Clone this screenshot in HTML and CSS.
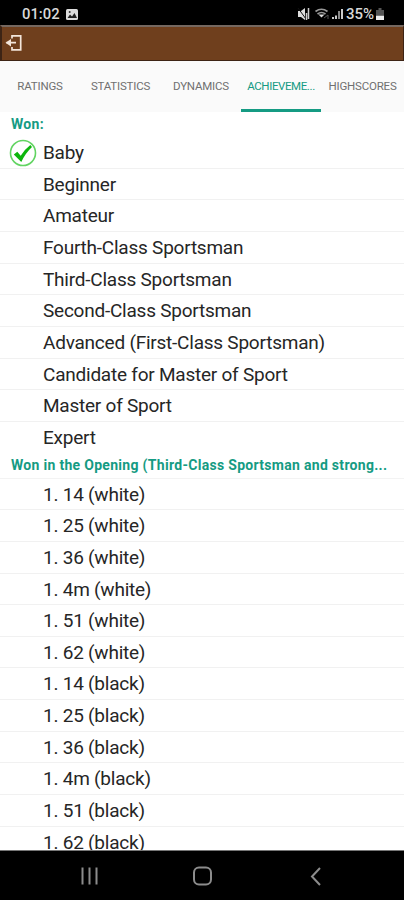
FILE: index.html
```html
<!DOCTYPE html>
<html lang="en">
<head>
<meta charset="utf-8">
<title>Achievements</title>
<link rel="stylesheet" href="styles.css">
</head>
<body>
<div class="screen">
  <div class="status">
    <span class="clock">01:02</span>
    <svg class="picture" width="12" height="11" viewBox="0 0 12 11"><rect width="12" height="11" rx="1.5" fill="#ddd"/><path d="M1.5 9 4 5.500l2 2L8.500 4l2.500 5z" fill="#222"/><circle cx="3.700" cy="3" r="1" fill="#333"/></svg>
    <svg class="signals" width="50" height="14" viewBox="0 0 50 14">
      <path d="M1 4h3l4-3v12L4 10H1z" fill="#ddd"/><path d="M1 1l8 11" stroke="#111" stroke-width="1"/><path d="M9.500 6v7M11.500 1v11" stroke="#ccc" stroke-width="1.500"/>
      <path d="M18.500 4.500q6-4.500 12 0M20.500 7q4-3 8 0" fill="none" stroke="#999" stroke-width="1.700"/><path d="M21.500 7.500h6l-3 3z" fill="#ddd"/><path d="M27 11l4-3v4" stroke="#555" fill="none"/>
      <path d="M36 12V10M39 12V8.500" stroke="#ccc" stroke-width="2"/><path d="M42 12V4" stroke="#888" stroke-width="2"/><path d="M45 12V2" stroke="#ccc" stroke-width="2"/>
    </svg>
    <span class="percent">35%</span>
    <svg class="battery" width="8" height="13" viewBox="0 0 8 13"><path d="M2.500 0h3v2H8v5H0V2h2.500z" fill="#555"/><path d="M0 7.500h8V12H0z" fill="#eee"/></svg>
  </div>
  <div class="toolbar">
    <svg width="18" height="18" viewBox="0 0 18 18" fill="none" stroke="#f3e6db" stroke-width="1.700"><path d="M7 4.500V1.800h8.700v14H7v-2.700M1.500 8.700H11"/><path d="M6 5 .5 8.700l5.500 3.700z" fill="#f3e6db" stroke="none"/></svg>
  </div>
  <div class="tabs">
    <div class="tab">RATINGS</div><div class="tab">STATISTICS</div><div class="tab">DYNAMICS</div><div class="tab active">ACHIEVEME...</div><div class="tab">HIGHSCORES</div>
  </div>
  <div class="content">
    <div class="heading">Won:</div>
    <div class="row"><svg class="check" width="28" height="28" viewBox="0 0 28 28"><circle cx="14" cy="14" r="12.500" fill="#fff" stroke="#62d462" stroke-width="1.600"/><path d="M4.800 15.500 8.300 12.700l3.400 4.100Q15.500 10.500 21.300 6l1.700 2Q16.500 14 12.300 23z" fill="#0db60d"/></svg>Baby</div>
    <div class="row">Beginner</div>
    <div class="row">Amateur</div>
    <div class="row">Fourth-Class Sportsman</div>
    <div class="row">Third-Class Sportsman</div>
    <div class="row">Second-Class Sportsman</div>
    <div class="row">Advanced (First-Class Sportsman)</div>
    <div class="row">Candidate for Master of Sport</div>
    <div class="row">Master of Sport</div>
    <div class="row last">Expert</div>
    <div class="heading ruled">Won in the Opening (Third-Class Sportsman and strong...</div>
    <div class="row">1. 14 (white)</div>
    <div class="row">1. 25 (white)</div>
    <div class="row">1. 36 (white)</div>
    <div class="row">1. 4m (white)</div>
    <div class="row">1. 51 (white)</div>
    <div class="row">1. 62 (white)</div>
    <div class="row">1. 14 (black)</div>
    <div class="row">1. 25 (black)</div>
    <div class="row">1. 36 (black)</div>
    <div class="row">1. 4m (black)</div>
    <div class="row">1. 51 (black)</div>
    <div class="row">1. 62 (black)</div>
  </div>
  <div class="nav">
    <svg width="404" height="50" viewBox="0 0 404 50" fill="none" stroke="#8c8c8c" stroke-width="2"><path d="M82.500 16.500v17M89.500 16.500v17M96.500 16.500v17"/><rect x="194" y="16.500" width="17" height="17" rx="5"/><path d="m320 17-8 8.500 8 8.500"/></svg>
  </div>
</div>
</body>
</html>
```
FILE: styles.css
```css
* { box-sizing: border-box; }
body { margin: 0; font-family: Roboto, "Liberation Sans", sans-serif; background: #fff; }
.screen { width: 404px; height: 900px; display: flex; flex-direction: column; overflow: hidden; }
.status { height: 25px; flex: none; background: #000; color: #d8d8d8; display: flex; align-items: center; padding: 3px 20px 0 22px; }
.clock { font-size: 14.8px; font-weight: 500; line-height: 20px; }
.picture { margin-left: 6px; }
.signals { margin-left: auto; }
.percent { font-size: 15px; font-weight: 500; line-height: 20px; margin: 0 2px 0 -1px; }
.toolbar { height: 36px; flex: none; background: #6f3f1d; border: solid #3d2415; border-top-color: #756860; border-width: 2px 1px 1px 2px; padding: 7px 0 0 3px; }
.toolbar svg { display: block; }
.tabs { height: 51px; flex: none; background: #fafafa; display: grid; grid-template-columns: 80px 81px 80px 80px 1fr; }
.tab { height: 51px; font-size: 11.5px; color: #707070; text-align: center; line-height: 50px; white-space: nowrap; letter-spacing: -0.2px; }
.active { color: #159b83; border-bottom: 3px solid #159b83; letter-spacing: -0.4px; }
.content { flex: 1; min-height: 0; overflow: hidden; background: #fff; border-bottom: 1px solid #777; }
.heading { height: 25.2px; padding-left: 11px; font-size: 14px; font-weight: 700; color: #159b83; line-height: 25px; white-space: nowrap; letter-spacing: 0.3px; }
.ruled { border-bottom: 1px solid #f3f3f3; }
.row { height: 31.63px; position: relative; padding-left: 43px; font-size: 19px; line-height: 32.5px; letter-spacing: -0.23px; color: #262626; border-bottom: 1px solid #f1f1f1; white-space: nowrap; }
.last { border-bottom: 0; }
.check { position: absolute; left: 9px; top: 2px; }
.nav { height: 49px; flex: none; background: #000; }
.nav svg { display: block; }
```
